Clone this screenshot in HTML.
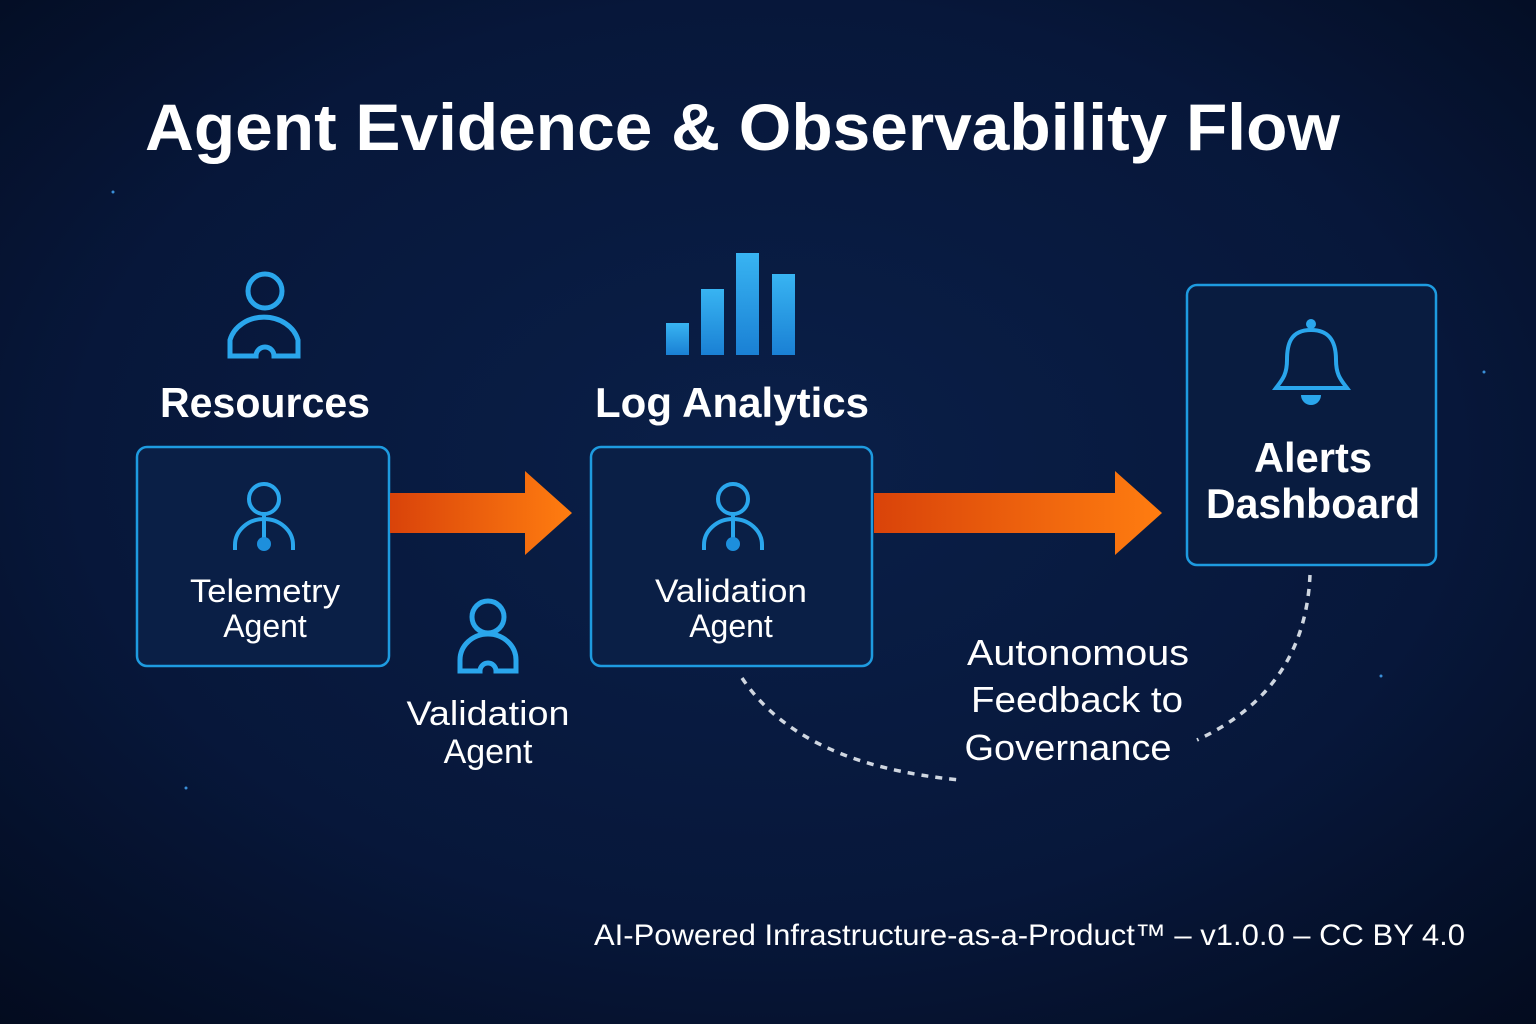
<!DOCTYPE html>
<html><head><meta charset="utf-8"><style>
html,body{margin:0;padding:0;width:1536px;height:1024px;overflow:hidden;background:#06122b}
svg{display:block}
text{font-family:"Liberation Sans",sans-serif;fill:#fff}
</style></head><body>
<svg width="1536" height="1024" viewBox="0 0 1536 1024" xmlns="http://www.w3.org/2000/svg">
<defs>
<radialGradient id="bg" cx="50%" cy="45%" r="75%">
<stop offset="0" stop-color="#0a1f48"/><stop offset="0.6" stop-color="#07173a"/><stop offset="1" stop-color="#030b1e"/>
</radialGradient>
<linearGradient id="ar" x1="0" x2="1"><stop offset="0" stop-color="#d9430a"/><stop offset="1" stop-color="#ff7d10"/></linearGradient>
<linearGradient id="bar" x1="0" y1="0" x2="0" y2="1"><stop offset="0" stop-color="#38b4f2"/><stop offset="1" stop-color="#1a80d4"/></linearGradient>
</defs>
<rect width="1536" height="1024" fill="url(#bg)"/>
<text x="145" y="150" font-size="66" font-weight="bold" textLength="1195" lengthAdjust="spacingAndGlyphs">Agent Evidence &amp; Observability Flow</text>

<g fill="none" stroke="#2aa6ec" stroke-width="5">
<circle cx="265" cy="291" r="17"/>
<path d="M230 356 V340 A35 30 0 0 1 298 340 V356 H274 A9 9 0 0 0 256 356 Z"/>
<circle cx="488" cy="617" r="16"/>
<path d="M460 671 V660 A28 26 0 0 1 516 660 V671 H496 A8 8 0 0 0 480 671 Z"/>
</g>
<text x="265" y="417" font-size="42" font-weight="bold" text-anchor="middle" textLength="210" lengthAdjust="spacingAndGlyphs">Resources</text>

<rect x="137" y="447" width="252" height="219" rx="10" fill="#0a1f46" stroke="#1e9be0" stroke-width="2.5"/>
<rect x="591" y="447" width="281" height="219" rx="10" fill="#0a1f46" stroke="#1e9be0" stroke-width="2.5"/>
<rect x="1187" y="285" width="249" height="280" rx="10" fill="#091c40" stroke="#1e9be0" stroke-width="2.5"/>

<g fill="none" stroke="#2aa6ec" stroke-width="4">
<circle cx="264" cy="499" r="15"/><path d="M264 514 V540 M235 550 V545 A29 26 0 0 1 293 545 V550"/>
<circle cx="733" cy="499" r="15"/><path d="M733 514 V540 M704 550 V545 A29 26 0 0 1 762 545 V550"/>
</g>
<circle cx="264" cy="544" r="7" fill="#1d8fdc"/>
<circle cx="733" cy="544" r="7" fill="#1d8fdc"/>

<text x="265" y="602" font-size="32" text-anchor="middle" textLength="150" lengthAdjust="spacingAndGlyphs">Telemetry</text>
<text x="265" y="637" font-size="32" text-anchor="middle">Agent</text>
<text x="731" y="602" font-size="32" text-anchor="middle" textLength="152" lengthAdjust="spacingAndGlyphs">Validation</text>
<text x="731" y="637" font-size="32" text-anchor="middle">Agent</text>
<text x="488" y="725" font-size="34" text-anchor="middle" textLength="163" lengthAdjust="spacingAndGlyphs">Validation</text>
<text x="488" y="763" font-size="34" text-anchor="middle">Agent</text>

<path d="M390 493 H525 V471 L572 513 L525 555 V533 H390 Z" fill="url(#ar)"/>
<path d="M874 493 H1115 V471 L1162 513 L1115 555 V533 H874 Z" fill="url(#ar)"/>

<g fill="url(#bar)">
<rect x="666" y="323" width="23" height="32"/>
<rect x="701" y="289" width="23" height="66"/>
<rect x="736" y="253" width="23" height="102"/>
<rect x="772" y="274" width="23" height="81"/>
</g>
<text x="732" y="417" font-size="42" font-weight="bold" text-anchor="middle" textLength="274" lengthAdjust="spacingAndGlyphs">Log Analytics</text>

<g fill="none" stroke="#2aa6ec" stroke-width="4">
<path d="M1311 330 C1290 330 1287 345 1287 360 C1287 375 1282 380 1276 388 H1347 C1341 380 1336 375 1336 360 C1336 345 1332 330 1311 330 Z"/>
</g>
<circle cx="1311" cy="324" r="5" fill="#2aa6ec"/>
<path d="M1301 395 A10 10 0 0 0 1321 395 Z" fill="#2aa6ec"/>
<text x="1313" y="472" font-size="42" font-weight="bold" text-anchor="middle" textLength="118" lengthAdjust="spacingAndGlyphs">Alerts</text>
<text x="1313" y="518" font-size="42" font-weight="bold" text-anchor="middle" textLength="214" lengthAdjust="spacingAndGlyphs">Dashboard</text>

<g fill="none" stroke="#cfd6e0" stroke-width="3.5" stroke-dasharray="7 7">
<path d="M742 678 Q800 765 960 780"/>
<path d="M1310 575 Q1305 690 1197 740"/>
</g>
<text x="1078" y="665" font-size="36" text-anchor="middle" textLength="222" lengthAdjust="spacingAndGlyphs">Autonomous</text>
<text x="1077" y="712" font-size="36" text-anchor="middle" textLength="212" lengthAdjust="spacingAndGlyphs">Feedback to</text>
<text x="1068" y="760" font-size="36" text-anchor="middle" textLength="207" lengthAdjust="spacingAndGlyphs">Governance</text>

<text x="594" y="945" font-size="30" fill="#e8edf5" textLength="871" lengthAdjust="spacingAndGlyphs">AI-Powered Infrastructure-as-a-Product™ – v1.0.0 – CC BY 4.0</text>

<g fill="#3a8fd8"><circle cx="113" cy="192" r="1.5"/><circle cx="186" cy="788" r="1.5"/><circle cx="1381" cy="676" r="1.5"/><circle cx="1484" cy="372" r="1.5"/></g>
</svg>
</body></html>
